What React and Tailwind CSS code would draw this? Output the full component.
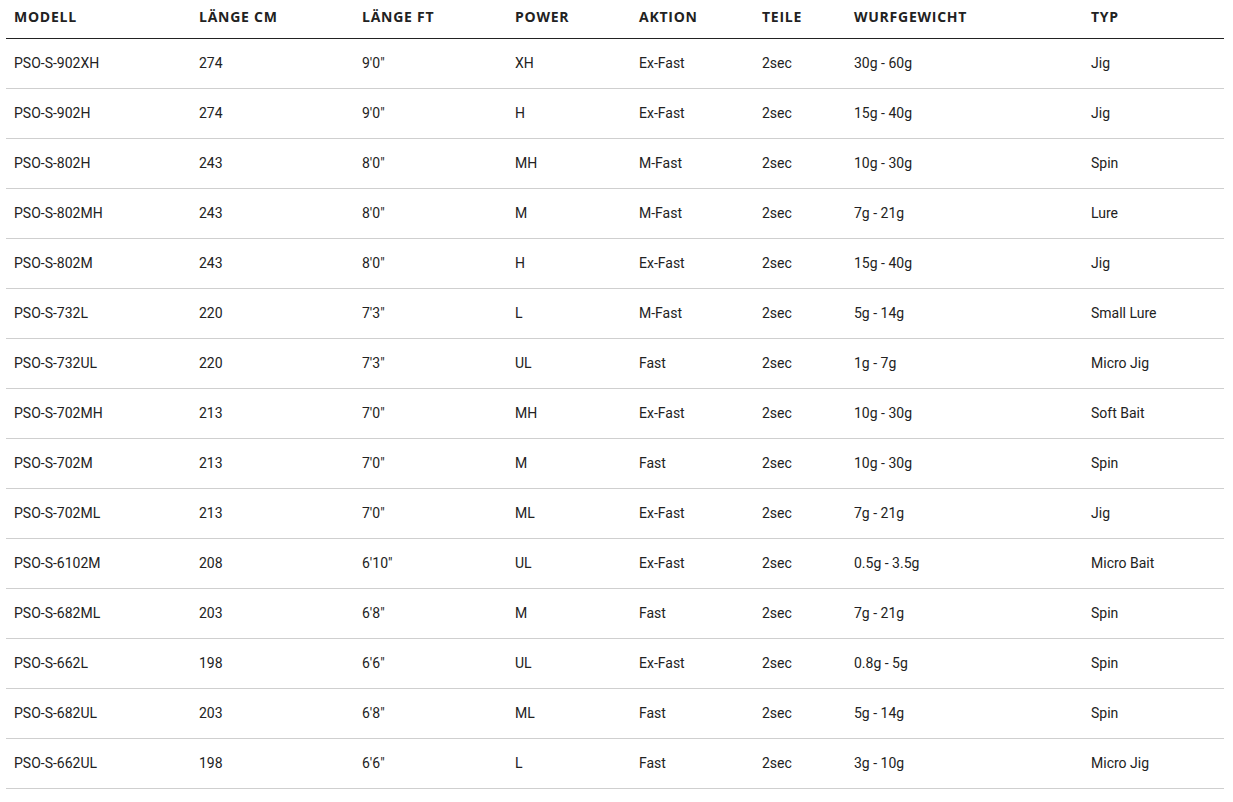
const rows = [
  ['PSO-S-902XH', '274', '9\'0"', 'XH', 'Ex-Fast', '2sec', '30g - 60g', 'Jig'],
  ['PSO-S-902H', '274', '9\'0"', 'H', 'Ex-Fast', '2sec', '15g - 40g', 'Jig'],
  ['PSO-S-802H', '243', '8\'0"', 'MH', 'M-Fast', '2sec', '10g - 30g', 'Spin'],
  ['PSO-S-802MH', '243', '8\'0"', 'M', 'M-Fast', '2sec', '7g - 21g', 'Lure'],
  ['PSO-S-802M', '243', '8\'0"', 'H', 'Ex-Fast', '2sec', '15g - 40g', 'Jig'],
  ['PSO-S-732L', '220', '7\'3"', 'L', 'M-Fast', '2sec', '5g - 14g', 'Small Lure'],
  ['PSO-S-732UL', '220', '7\'3"', 'UL', 'Fast', '2sec', '1g - 7g', 'Micro Jig'],
  ['PSO-S-702MH', '213', '7\'0"', 'MH', 'Ex-Fast', '2sec', '10g - 30g', 'Soft Bait'],
  ['PSO-S-702M', '213', '7\'0"', 'M', 'Fast', '2sec', '10g - 30g', 'Spin'],
  ['PSO-S-702ML', '213', '7\'0"', 'ML', 'Ex-Fast', '2sec', '7g - 21g', 'Jig'],
  ['PSO-S-6102M', '208', '6\'10"', 'UL', 'Ex-Fast', '2sec', '0.5g - 3.5g', 'Micro Bait'],
  ['PSO-S-682ML', '203', '6\'8"', 'M', 'Fast', '2sec', '7g - 21g', 'Spin'],
  ['PSO-S-662L', '198', '6\'6"', 'UL', 'Ex-Fast', '2sec', '0.8g - 5g', 'Spin'],
  ['PSO-S-682UL', '203', '6\'8"', 'ML', 'Fast', '2sec', '5g - 14g', 'Spin'],
  ['PSO-S-662UL', '198', '6\'6"', 'L', 'Fast', '2sec', '3g - 10g', 'Micro Jig'],
];

const headers = ['Modell', 'Länge cm', 'Länge ft', 'Power', 'Aktion', 'Teile', 'Wurfgewicht', 'Typ'];

// column widths measured from the screenshot
const cols = 'grid grid-cols-[185px_163px_153px_124px_123px_92px_237px_141px]';

export default function App() {
  return (
    <div className="bg-white w-[1233px] h-[802px] pl-[6px]">
      <div className="w-[1218px]">
        {/* Header */}
        <div className={`${cols} h-[39px] border-b border-[#222]`}>
          {headers.map((h) => (
            <div
              key={h}
              className="pl-[8px] pt-[7px] text-[14px] leading-[20px] font-bold uppercase text-[#222] font-['Open_Sans',sans-serif] tracking-[0.75px]"
            >
              {h}
            </div>
          ))}
        </div>

        {/* Body */}
        {rows.map((r) => (
          <div key={r[0]} className={`${cols} h-[50px] border-b border-[#cfcfcf] items-center`}>
            {r.map((c, i) => (
              <div key={i} className="pl-[8px] pb-[1px] text-[14px] text-[#222] font-['Roboto',sans-serif]">
                {c}
              </div>
            ))}
          </div>
        ))}
      </div>
    </div>
  );
}
